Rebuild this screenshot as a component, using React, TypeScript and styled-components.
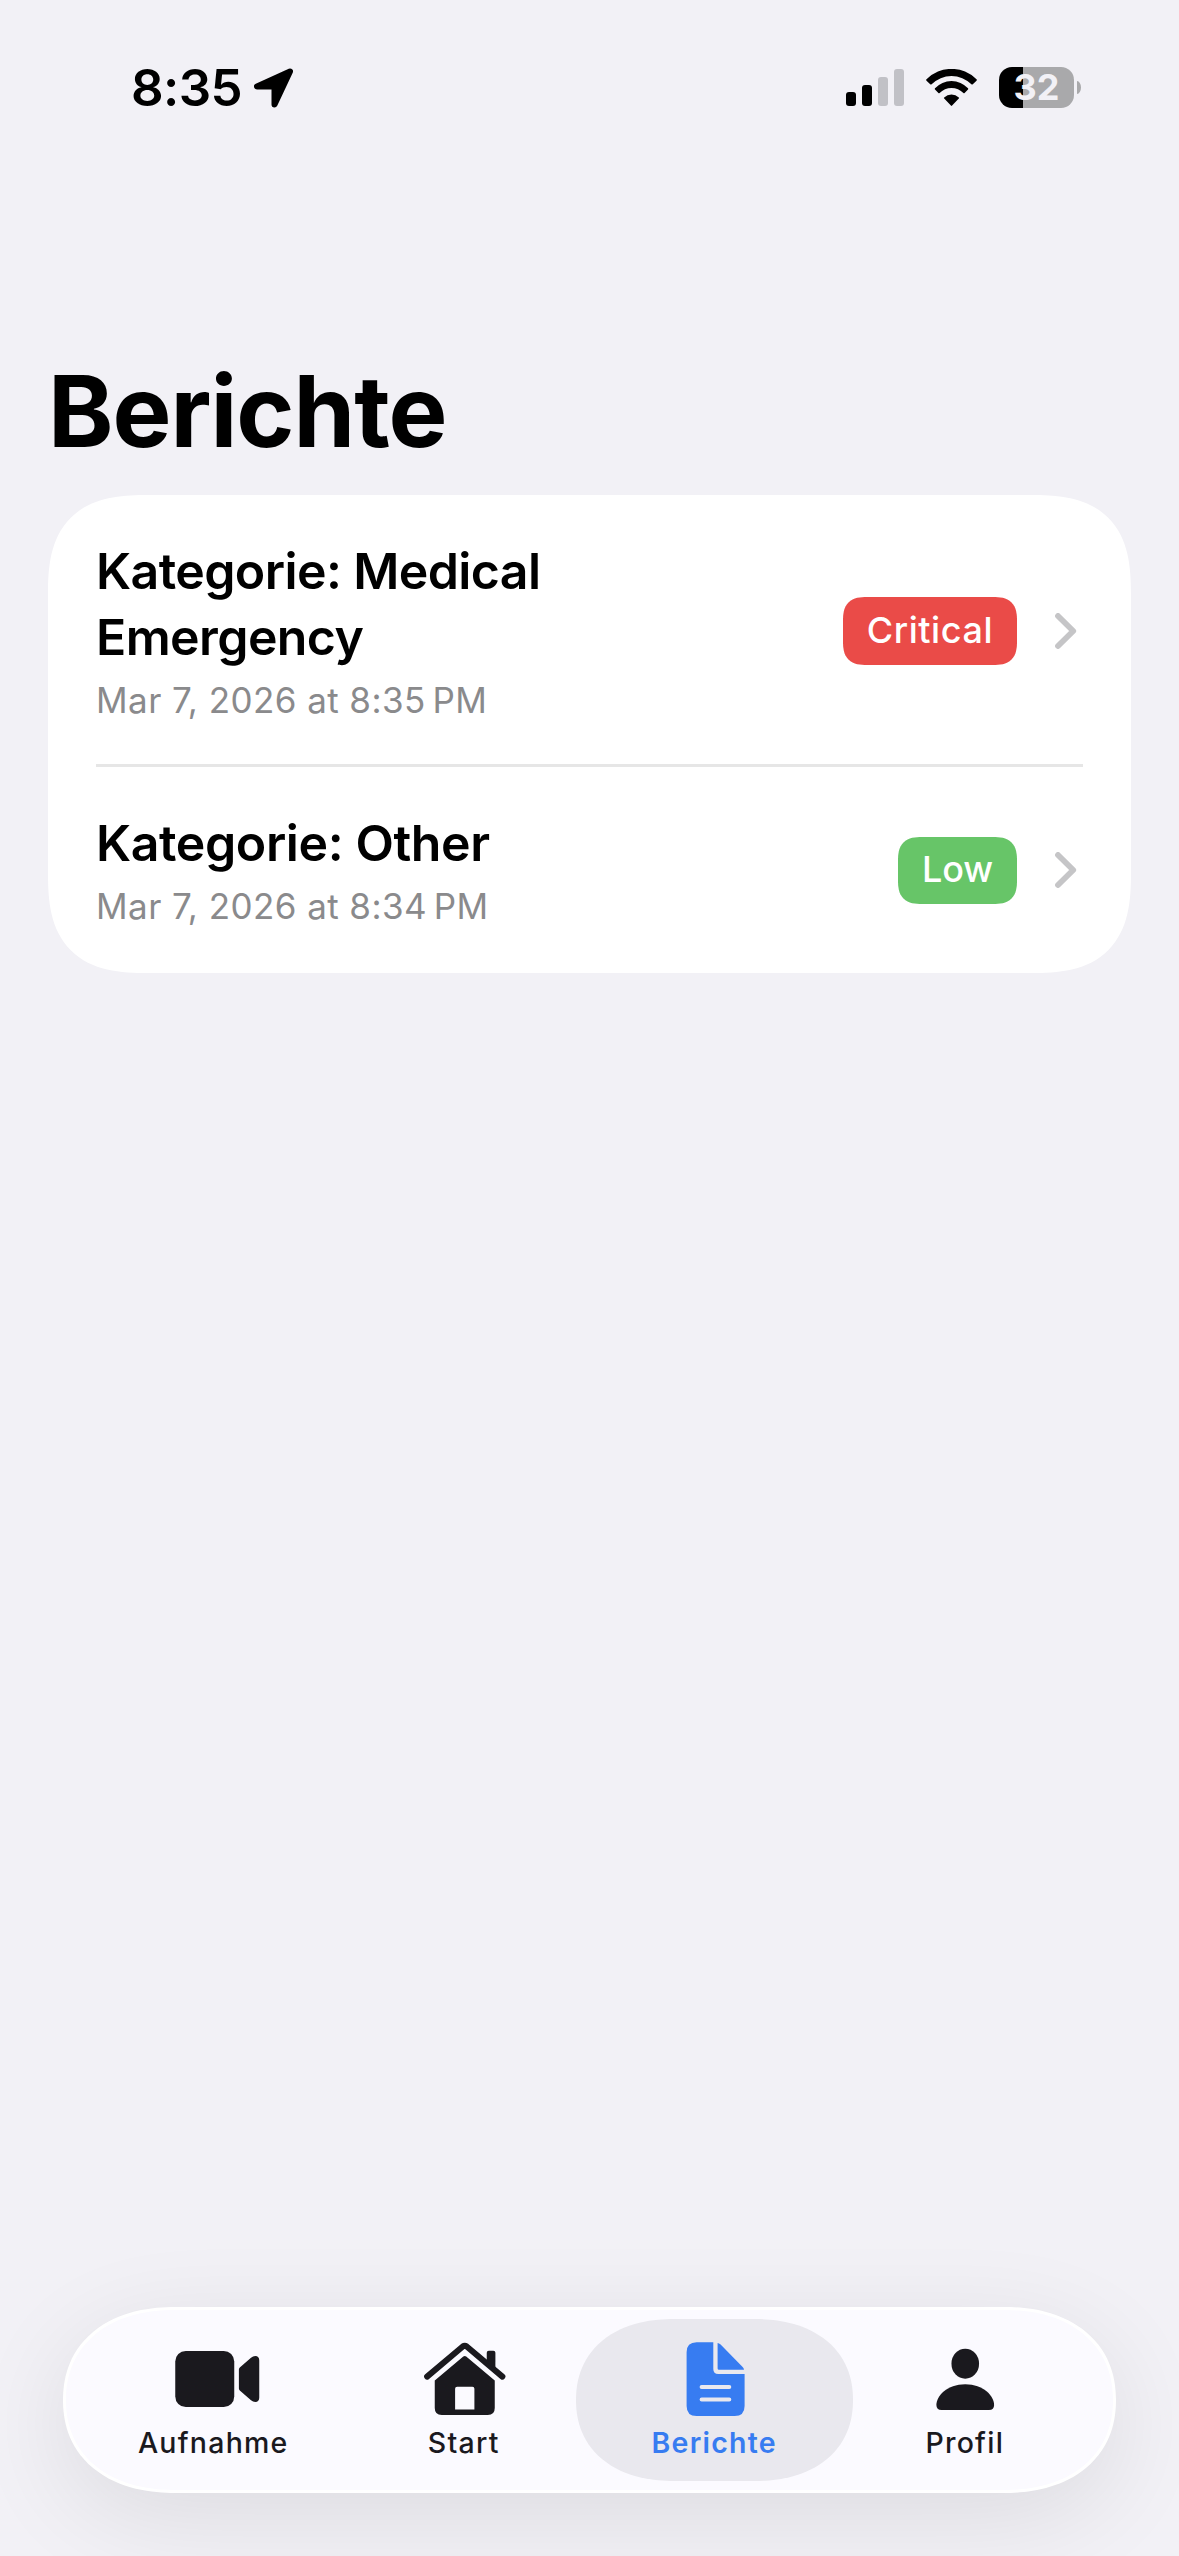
import React from "react";
import styled, { createGlobalStyle } from "styled-components";

const GlobalStyle = createGlobalStyle`
  *, *::before, *::after { box-sizing: border-box; }
  body {
    margin: 0;
    background: #f2f1f6;
    font-family: Inter, "Liberation Sans", sans-serif;
    -webkit-font-smoothing: antialiased;
  }
`;

const Screen = styled.div`
  display: flex;
  flex-direction: column;
  width: 1179px;
  height: 2556px;
  background: #f2f1f6;
  color: #000;
  overflow: hidden;
`;

const StatusBar = styled.header`
  display: flex;
  justify-content: space-between;
  align-items: flex-start;
  height: 351px;
  padding: 67px 98px 0 131px;
`;

const StatusGroup = styled.div<{ $gap: number }>`
  display: flex;
  align-items: center;
  gap: ${(p) => p.$gap}px;
  height: 41px;
`;

const Clock = styled.span`
  font-size: 51px;
  font-weight: 600;
  line-height: 41px;
  letter-spacing: -0.6px;
`;

const Battery = styled.div`
  display: flex;
  align-items: center;
  gap: 3px;
`;

const BatteryBody = styled.div<{ $level: number }>`
  display: flex;
  align-items: center;
  justify-content: center;
  width: 75px;
  height: 41px;
  border-radius: 13px;
  background: linear-gradient(
    to right,
    #000 ${(p) => p.$level}%,
    #a9a9ab ${(p) => p.$level}%
  );
  color: #f2f1f6;
  font-size: 36px;
  font-weight: 700;
  line-height: 41px;
`;

const BatteryCap = styled.div`
  width: 4px;
  height: 13px;
  border-radius: 0 4px 4px 0 / 0 6.5px 6.5px 0;
  background: #a9a9ab;
`;

const Title = styled.h1`
  margin: 0 48px 24px;
  font-size: 99px;
  font-weight: 700;
  line-height: 120px;
  letter-spacing: -1px;
`;

const Card = styled.ul`
  margin: 0 48px;
  padding: 0 48px;
  list-style: none;
  background: #fff;
  border-radius: 78px;
  @supports (corner-shape: squircle) {
    border-radius: 100px;
    corner-shape: superellipse(1.42);
  }
`;

const Row = styled.li`
  display: flex;
  align-items: center;
  padding: 43px 0 40px;
  border-bottom: 3px solid #e6e6e6;
  &:last-child {
    padding-bottom: 43px;
    border-bottom: 0;
  }
`;

const RowText = styled.div`
  display: flex;
  flex: 1;
  flex-direction: column;
  gap: 6px;
`;

const RowTitle = styled.span<{ $tracking: number }>`
  max-width: 560px;
  font-size: 50px;
  font-weight: 600;
  line-height: 66px;
  letter-spacing: ${(p) => p.$tracking}px;
`;

const RowDate = styled.span`
  color: #8a8a8c;
  font-size: 35px;
  line-height: 48px;
  letter-spacing: 0.43px;
`;

const Badge = styled.span<{ $color: string; $height: number; $tracking: number }>`
  display: flex;
  align-items: center;
  height: ${(p) => p.$height}px;
  padding: 0 24px 2px;
  border-radius: 18px;
  background: ${(p) => p.$color};
  color: #fff;
  font-size: 36px;
  font-weight: 540;
  letter-spacing: ${(p) => p.$tracking}px;
  @supports (corner-shape: squircle) {
    border-radius: 24px;
    corner-shape: superellipse(1.42);
  }
`;

const Chevron = styled.svg`
  width: 22px;
  height: 36px;
  margin: 0 6px 0 38px;
  fill: none;
  stroke: #c5c5c7;
  stroke-width: 5.8;
  stroke-linecap: round;
  stroke-linejoin: round;
`;

const TabBar = styled.nav`
  display: grid;
  grid-template-columns: repeat(4, 250.5px);
  justify-content: center;
  height: 186px;
  margin: auto 63px 63px;
  padding: 9px 1px 9px 0;
  border: 3px solid #fff;
  border-radius: 93px;
  background: #fbfaff;
  box-shadow: 0 24px 100px rgba(0, 0, 0, 0.09);
  @supports (corner-shape: squircle) {
    border-radius: 112px / 93px;
    corner-shape: superellipse(1.15);
  }
`;

const Tab = styled.a<{ $active?: boolean }>`
  display: flex;
  flex-direction: column;
  align-items: center;
  gap: 6px;
  height: 162px;
  margin: 0 -13.5px;
  padding-top: 21px;
  border-radius: 81px;
  background: ${(p) => (p.$active ? "#e9e8ee" : "transparent")};
  color: ${(p) => (p.$active ? "#377cf1" : "#1a191e")};
  font-size: 28.5px;
  font-weight: ${(p) => (p.$active ? 600 : 500)};
  line-height: 37px;
  letter-spacing: 1.25px;
  text-decoration: none;
  @supports (corner-shape: squircle) {
    border-radius: 98px / 81px;
    corner-shape: superellipse(1.15);
  }
`;

const TabIcon = styled.svg`
  width: 100px;
  height: 78px;
  margin-right: 1px;
  fill: currentColor;
`;

const LocationArrow = () => (
  <svg width="39" height="40" viewBox="0 0 39 40">
    <path d="M36 3.5 3 18.5H20.5V36.5Z" fill="#000" stroke="#000" strokeWidth="6" strokeLinejoin="round" />
  </svg>
);

const Signal = () => (
  <svg width="58" height="37" viewBox="0 0 58 37">
    <rect x="0" y="23" width="10" height="14" rx="3" />
    <rect x="16" y="16" width="10" height="21" rx="3" />
    <rect x="32" y="8" width="10" height="29" rx="3" fill="#c1c1c6" />
    <rect x="48" y="0" width="10" height="37" rx="3" fill="#c1c1c6" />
  </svg>
);

const Wifi = () => (
  <svg width="51" height="37" viewBox="0 0 51 37">
    <path d="M.5 10.3A35.2 35.2 0 0 1 50.5 10.3Q51.2 11 50.5 11.7L46.5 15.4Q46 15.8 45.4 15.3A28 28 0 0 0 5.6 15.3Q5 15.8 4.5 15.4L.5 11.7Q-.2 11 .5 10.3Z" />
    <path d="M9 19.3A22.4 22.4 0 0 1 42 19.3Q42.6 20 42 20.6L38.6 24.1Q38 24.6 37.4 24.1A16.2 16.2 0 0 0 13.6 24.1Q13 24.6 12.4 24.1L9 20.6Q8.4 20 9 19.3Z" />
    <path d="M18.2 28.4A10.5 10.5 0 0 1 32.8 28.4Q33.4 29 32.8 29.6L26.1 36.6Q25.5 37.2 24.9 36.6L18.2 29.6Q17.6 29 18.2 28.4Z" />
  </svg>
);

const VideoIcon = () => (
  <TabIcon viewBox="0 0 100 78">
    <rect x="12.25" y="11" width="59" height="56" rx="10.5" />
    <path d="M75.9 29.4Q75.9 28.2 76.8 27.4L88 17.8Q90 16 92.3 16Q96.25 16.2 96.25 20.5V57.5Q96.25 61.8 92.3 62Q90 62 88 60.2L76.8 50.6Q75.9 49.8 75.9 48.6Z" />
  </TabIcon>
);

const HouseIcon = () => (
  <TabIcon viewBox="0 0 100 78">
    <path
      d="M14.1 36.6 49.8 6.5Q51.75 5 53.7 6.5L89.4 36.6"
      fill="none"
      stroke="currentColor"
      strokeWidth="6"
      strokeLinecap="round"
      strokeLinejoin="round"
    />
    <path d="M73.75 22V12.7Q73.75 10.7 75.75 10.7H80.4Q82.4 10.7 82.4 12.7V30Z" />
    <path
      fillRule="evenodd"
      d="M50.3 16.6Q51.75 15.4 53.2 16.6L81.75 40.6V68Q81.75 75 74.75 75H28.75Q21.75 75 21.75 68V40.6ZM44.1 46.7Q42.1 46.7 42.1 48.7V69.4H61.4V48.7Q61.4 46.7 59.4 46.7Z"
    />
  </TabIcon>
);

const DocumentIcon = () => (
  <TabIcon viewBox="0 0 100 78">
    <path
      fillRule="evenodd"
      d="M32.6 2.3H49.3V29Q49.3 34 54.3 34H80.6V66Q80.6 76 70.6 76H32.6Q22.6 76 22.6 66V12.3Q22.6 2.3 32.6 2.3ZM37.6 45A2 2 0 0 0 37.6 49H65.3A2 2 0 0 0 65.3 45ZM37.6 57.5A2 2 0 0 0 37.6 61.5H65.3A2 2 0 0 0 65.3 57.5Z"
    />
    <path d="M53.6 3Q55 3 56.6 4.6L78.4 26.8Q80 28.4 80 29.8H55Q53.6 29.8 53.6 28.4Z" />
  </TabIcon>
);

const PersonIcon = () => (
  <TabIcon viewBox="0 0 100 78">
    <ellipse cx="51.25" cy="23.7" rx="13.8" ry="15" />
    <path d="M22.4 65C22.4 56 33 44.3 51.25 44.3S80.1 56 80.1 65Q80.1 70 75 70H27.5Q22.4 70 22.4 65Z" />
  </TabIcon>
);

const reports = [
  {
    title: "Kategorie: Medical Emergency",
    titleTracking: -0.6,
    date: "Mar 7, 2026 at 8:35\u202FPM",
    level: "Critical",
    levelTracking: 0.55,
    color: "#ea4b48",
    height: 68,
  },
  {
    title: "Kategorie: Other",
    titleTracking: -0.4,
    date: "Mar 7, 2026 at 8:34\u202FPM",
    level: "Low",
    levelTracking: -0.1,
    color: "#67c568",
    height: 67,
  },
];

const tabs = [
  { label: "Aufnahme", Icon: VideoIcon },
  { label: "Start", Icon: HouseIcon },
  { label: "Berichte", Icon: DocumentIcon, active: true },
  { label: "Profil", Icon: PersonIcon },
];

export default function App() {
  return (
    <>
      <GlobalStyle />
      <Screen>
        <StatusBar>
          <StatusGroup $gap={12}>
            <Clock>8:35</Clock>
            <LocationArrow />
          </StatusGroup>
          <StatusGroup $gap={22}>
            <Signal />
            <Wifi />
            <Battery>
              <BatteryBody $level={32}>32</BatteryBody>
              <BatteryCap />
            </Battery>
          </StatusGroup>
        </StatusBar>
        <Title>Berichte</Title>
        <Card>
          {reports.map((r) => (
            <Row key={r.title}>
              <RowText>
                <RowTitle $tracking={r.titleTracking}>{r.title}</RowTitle>
                <RowDate>{r.date}</RowDate>
              </RowText>
              <Badge $color={r.color} $height={r.height} $tracking={r.levelTracking}>
                {r.level}
              </Badge>
              <Chevron viewBox="0 0 22 36">
                <path d="M3 3 18.2 18 3 33" />
              </Chevron>
            </Row>
          ))}
        </Card>
        <TabBar>
          {tabs.map(({ label, Icon, active }) => (
            <Tab key={label} $active={active}>
              <Icon />
              {label}
            </Tab>
          ))}
        </TabBar>
      </Screen>
    </>
  );
}
